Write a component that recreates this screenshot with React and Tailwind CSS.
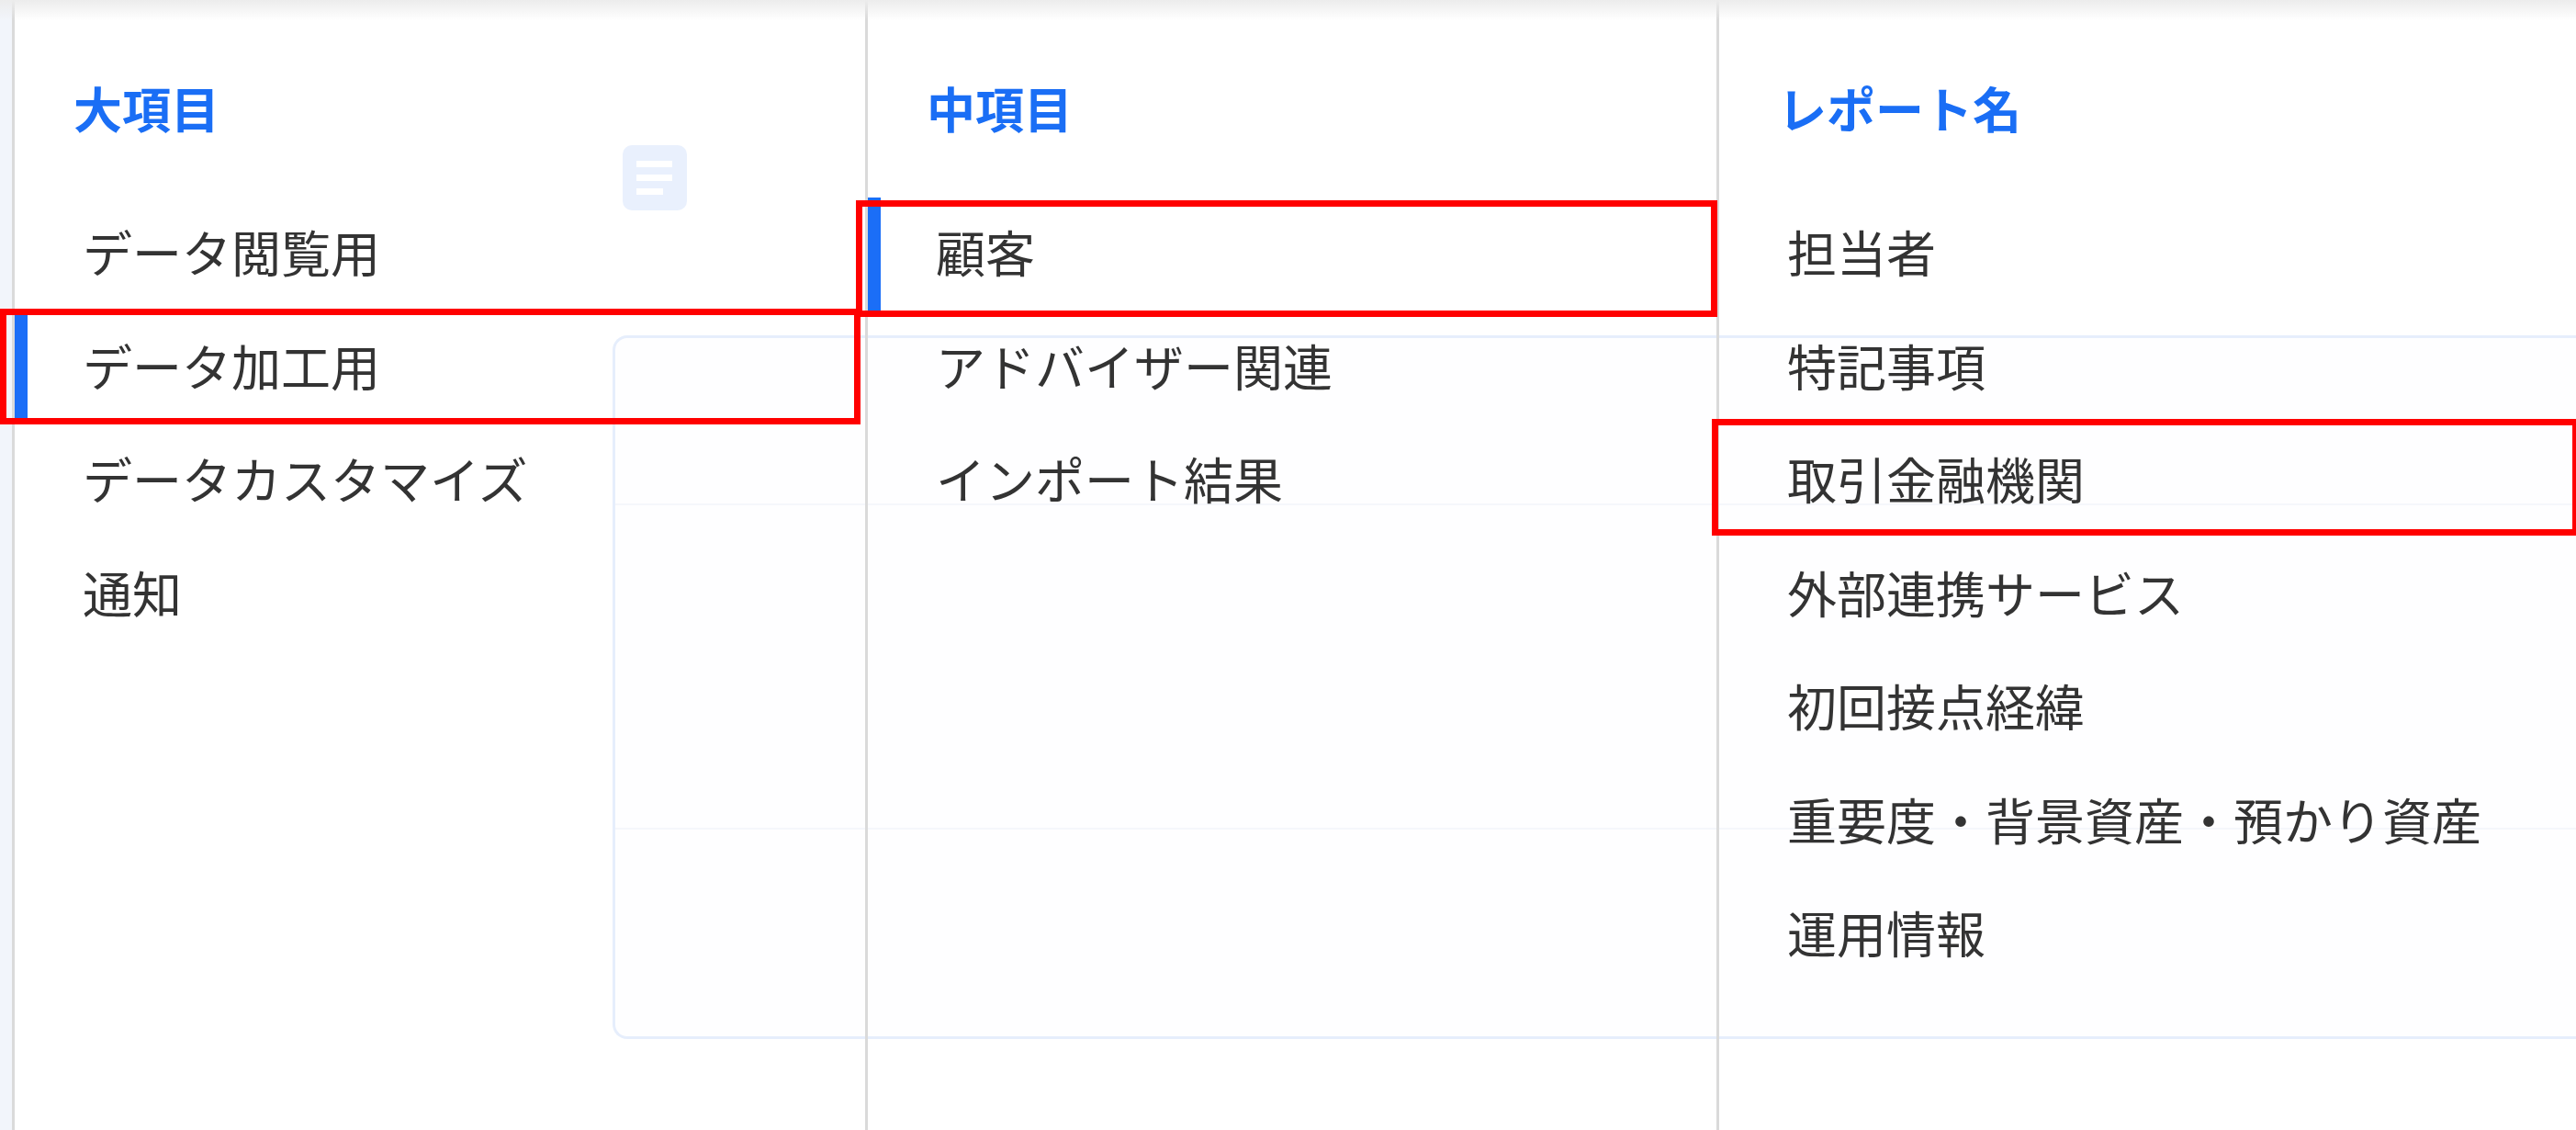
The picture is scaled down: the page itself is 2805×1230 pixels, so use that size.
import React from 'react';

const columns = [
    {
        title: '大項目',
        width: 'w-[929px]',
        items: ['データ閲覧用', 'データ加工用', 'データカスタマイズ', '通知'],
        active: 1,
        mark: { index: 1, className: '-left-[16px] right-[5px] -top-[3px] bottom-0' },
    },
    {
        title: '中項目',
        width: 'w-[927px]',
        items: ['顧客', 'アドバイザー関連', 'インポート結果'],
        active: 0,
        mark: { index: 0, className: '-left-[13px] -right-[1px] top-[3px] -bottom-[6px]' },
    },
    {
        title: 'レポート名',
        width: 'flex-1',
        items: ['担当者', '特記事項', '取引金融機関', '外部連携サービス', '初回接点経緯', '重要度・背景資産・預かり資産', '運用情報'],
        active: -1,
        mark: { index: 2, className: '-left-[8px] -right-[3px] -top-[6px] bottom-[3px]' },
    },
];

function MenuColumn({ col }) {
    return (
        <div className={`${col.width} border-l-[3px] border-[#dadada] flex flex-col`}>
            {/* column header */}
            <div className="h-[215px] pt-[81px] pl-[64px]">
                <span className="text-[53px] leading-[72px] font-bold text-[#1a6ef5]">{col.title}</span>
            </div>
            {col.items.map((item, i) => (
                <div key={item} className="relative h-[123.5px] pt-[23px] pl-[74px]">
                    {i === col.active && (
                        <div className="absolute left-0 top-0 bottom-0 w-[14px] bg-[#1b6ef7]" />
                    )}
                    <span className="text-[54px] leading-[72px] text-[#333333] whitespace-nowrap">{item}</span>
                    {i === col.mark.index && (
                        <div className={`absolute border-[7px] border-[#ff0000] ${col.mark.className}`} />
                    )}
                </div>
            ))}
        </div>
    );
}

export default function App() {
    return (
        <div className="relative w-[2805px] h-[1230px] overflow-hidden bg-white font-['Noto_Sans_CJK_JP','Noto_Sans',sans-serif]">
            {/* page underneath the menu */}
            <div className="pt-[158px] pl-[667px]">
                <div className="ml-[11px] w-[70px] h-[71px] rounded-[10px] bg-[#e9f0fd] flex flex-col justify-center gap-[8px] pl-[15px]">
                    <div className="w-[39px] h-[7px] bg-white" />
                    <div className="w-[39px] h-[7px] bg-white" />
                    <div className="w-[29px] h-[7px] bg-white" />
                </div>
                <div className="mt-[136px] h-[766px] rounded-l-[16px] border-[3px] border-r-0 border-[#e6eefc] bg-[#fefeff] flex flex-col">
                    <div className="h-[182px] border-b-2 border-[#f5f7fb]" />
                    <div className="h-[353px] border-b-2 border-[#f5f7fb]" />
                </div>
            </div>

            {/* menu overlay */}
            <div className="absolute inset-0 flex">
                <div className="w-[13px] bg-[#f2f5fb]" />
                {columns.map(col => (
                    <MenuColumn key={col.title} col={col} />
                ))}
            </div>
            <div className="absolute left-0 right-0 top-0 h-[22px] bg-gradient-to-b from-[#ececec] to-transparent" />
        </div>
    );
}
